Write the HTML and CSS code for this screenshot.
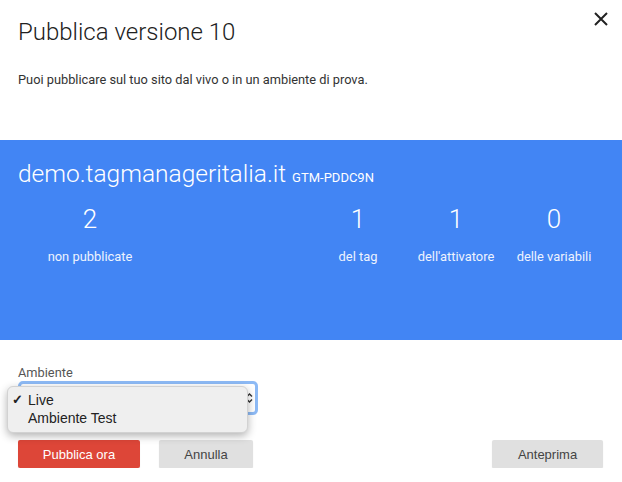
FILE: index.html
```html
<!DOCTYPE html>
<html>

<head>
    <meta charset="UTF-8">
    <link rel="stylesheet" href="styles.css">
</head>

<body>
    <div class="dialog">
        <div class="head">
            <p class="title">Pubblica versione 10</p>
            <button class="close" aria-label="Chiudi">
                <svg width="14" height="14" viewBox="0 0 14 14">
                    <path d="M1 1 L13 13 M13 1 L1 13" stroke="#222" stroke-width="2" fill="none"></path>
                </svg>
            </button>
        </div>
        <p class="intro">Puoi pubblicare sul tuo sito dal vivo o in un ambiente di prova.</p>

        <div class="band">
            <p class="domain">demo.tagmanageritalia.it <span class="gtm">GTM-PDDC9N</span></p>
            <div class="stats">
                <div class="stat">
                    <span class="num">2</span>
                    <span class="label">non pubblicate</span>
                </div>
                <div class="stat spacer"></div>
                <div class="stat">
                    <span class="num">1</span>
                    <span class="label">del tag</span>
                </div>
                <div class="stat">
                    <span class="num">1</span>
                    <span class="label">dell'attivatore</span>
                </div>
                <div class="stat">
                    <span class="num">0</span>
                    <span class="label">delle variabili</span>
                </div>
            </div>
        </div>

        <div class="env">
            <p class="env-label">Ambiente</p>
            <div class="field">
                <div class="select">
                    <svg class="arrows" width="7" height="12" viewBox="0 0 7 12">
                        <path d="M1 4.5 L3.5 2 L6 4.5 M1 7.5 L3.5 10 L6 7.5" stroke="#333" stroke-width="1.4" fill="none"></path>
                    </svg>
                </div>
                <ul class="menu">
                    <li><span class="check">✓</span>Live</li>
                    <li><span class="check"></span>Ambiente Test</li>
                </ul>
            </div>
        </div>

        <div class="actions">
            <button class="btn primary">Pubblica ora</button>
            <button class="btn">Annulla</button>
            <button class="btn preview">Anteprima</button>
        </div>
    </div>
</body>

</html>
```

FILE: styles.css
```css
body {
    margin: 0;
    background-color: white;
    font-family: Roboto, "Liberation Sans", sans-serif;
}

p {
    margin: 0;
}

.dialog {
    width: 622px;
}

.head {
    display: flex;
    justify-content: space-between;
    align-items: flex-start;
    padding: 18px 14px 0 18px;
}

.title {
    font-size: 24px;
    font-weight: 300;
    line-height: 28px;
    color: #212121;
}

.close {
    border: none;
    background: none;
    padding: 0;
    margin-top: -6px;
    cursor: pointer;
}

.intro {
    font-size: 12.8px;
    line-height: 16px;
    color: #333;
    padding: 26px 18px 0;
}

.band {
    margin-top: 52px;
    height: 200px;
    box-sizing: border-box;
    padding: 20px 19px 0 18px;
    background-color: #4285f4;
    color: white;
}

.domain {
    font-size: 24.5px;
    font-weight: 300;
    line-height: 28px;
}

.gtm {
    font-size: 13px;
    font-weight: 400;
}

.stats {
    display: grid;
    grid-template-columns: 144px 1fr 98px 98px 98px;
    margin-top: 12px;
}

.stat {
    display: flex;
    flex-direction: column;
    align-items: center;
}

.num {
    font-size: 26px;
    font-weight: 300;
    line-height: 30px;
}

.label {
    font-size: 12.9px;
    line-height: 16px;
    margin-top: 15px;
    color: #eef3fe;
}

.env {
    padding: 25px 18px 0;
}

.env-label {
    font-size: 12.8px;
    line-height: 16px;
    color: #555;
}

.field {
    position: relative;
    width: 240px;
}

.select {
    height: 34px;
    box-sizing: border-box;
    border: 3px solid #8dbaf5;
    border-radius: 5px;
    background-color: white;
    display: flex;
    justify-content: flex-end;
    align-items: center;
    padding-right: 2px;
}

.menu {
    position: absolute;
    left: -11px;
    top: 5px;
    width: 241px;
    box-sizing: border-box;
    margin: 0;
    padding: 4px 0 5px;
    list-style: none;
    background-color: #efefef;
    border: 1px solid #d2d2d2;
    border-radius: 6px;
    box-shadow: 0 3px 9px rgba(0, 0, 0, 0.3);
    font-family: "Liberation Sans", Arial, sans-serif;
    font-size: 14px;
    line-height: 18px;
    color: #222;
}

.menu li {
    display: flex;
}

.check {
    width: 16px;
    padding-left: 4px;
    font-size: 13px;
    font-weight: bold;
}

.actions {
    display: flex;
    padding: 25px 19px 0 18px;
}

.btn {
    height: 28px;
    border: none;
    border-radius: 2px;
    background-color: #e0e0e0;
    color: #444;
    font-family: "Liberation Sans", Arial, sans-serif;
    font-size: 13px;
    width: 94px;
    margin-left: 19px;
    box-shadow: 0 1px 1px rgba(0, 0, 0, 0.12);
    cursor: pointer;
}

.primary {
    width: 122px;
    margin-left: 0;
    background-color: #dd4638;
    color: white;
}

.preview {
    width: 111px;
    margin-left: auto;
}
```
